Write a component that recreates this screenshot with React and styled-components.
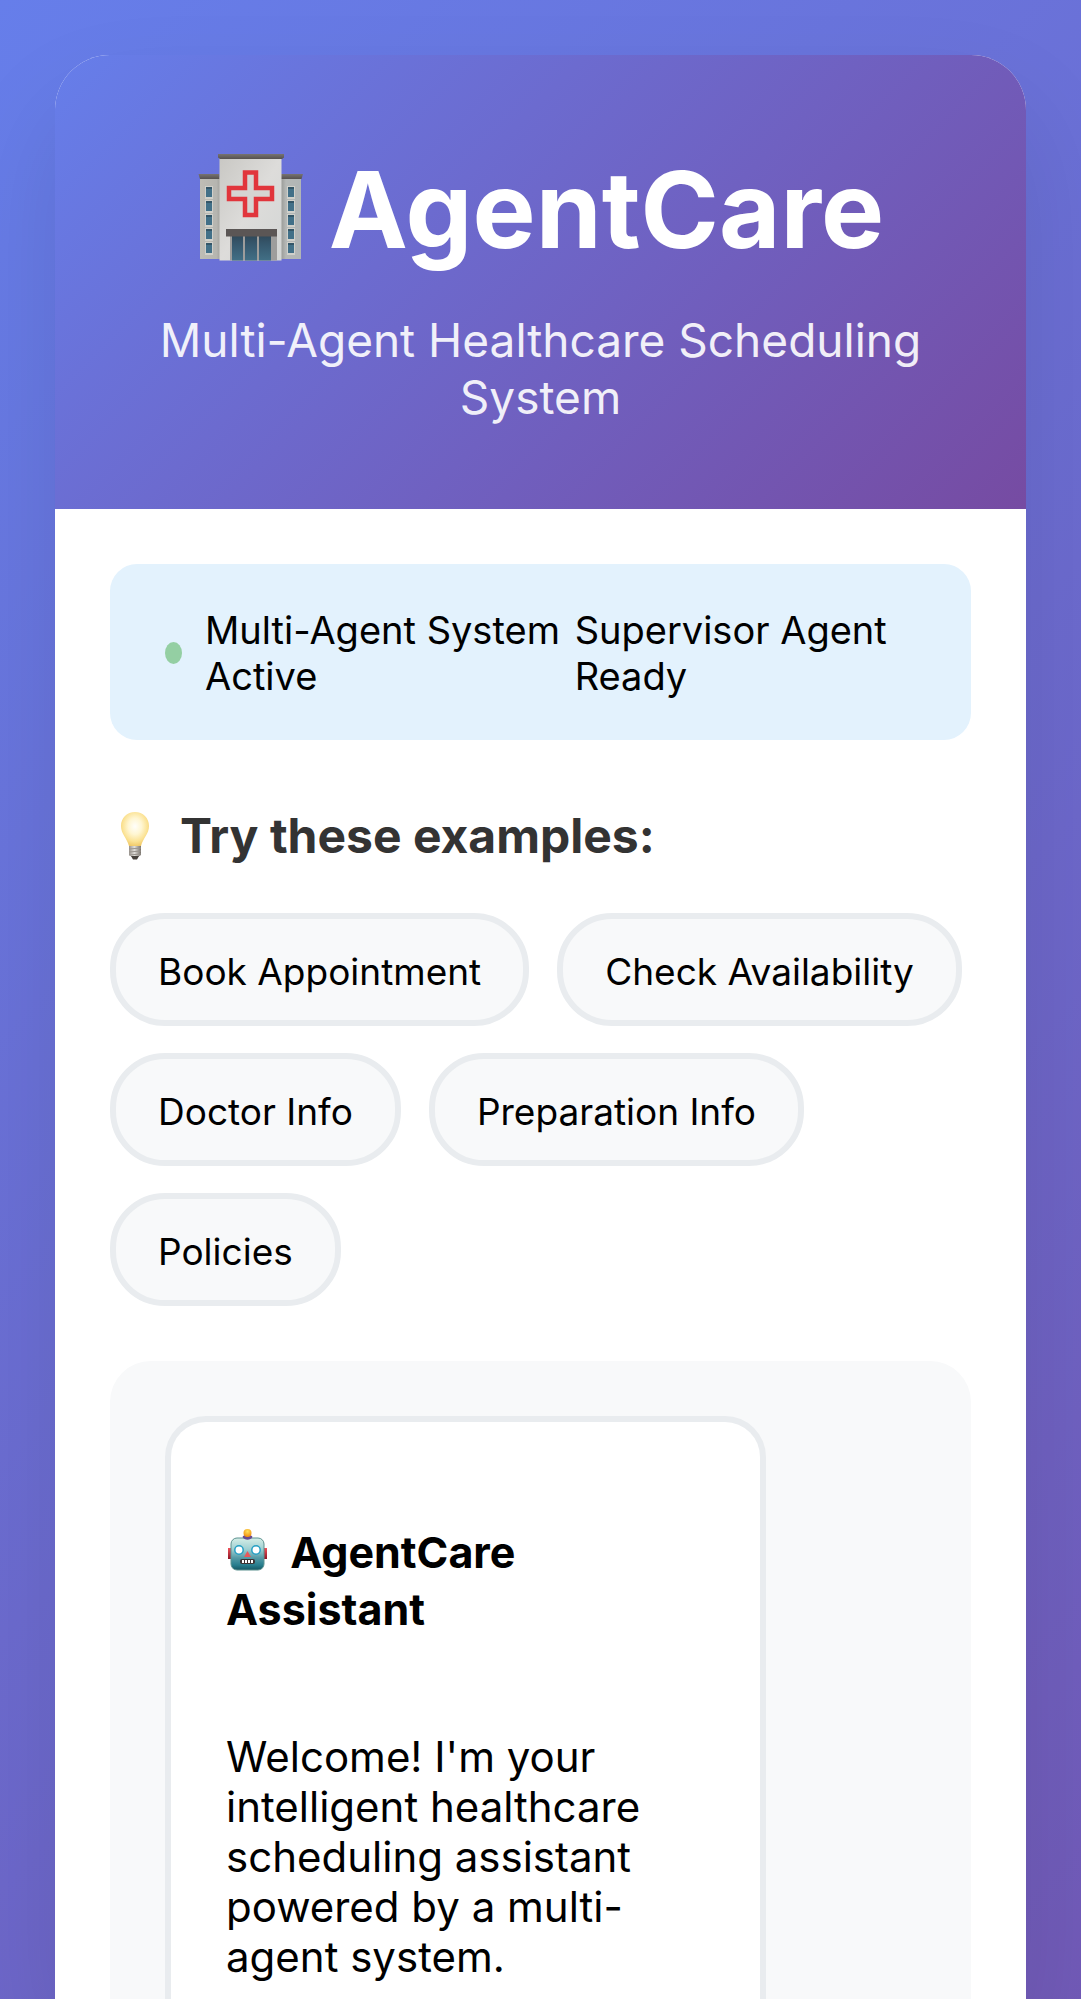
import React from "react";
import styled, { createGlobalStyle } from "styled-components";

const GlobalStyle = createGlobalStyle`
  *, *::before, *::after { box-sizing: border-box; }
  html { background: #6c5ab5; }
  body {
    margin: 0;
    font-family: Inter, "Liberation Sans", sans-serif;
    color: #000;
  }
`;

const Page = styled.div`
  height: 100vh;
  overflow: hidden;
  padding: 55px 55px 0;
  display: flex;
  flex-direction: column;
  background: linear-gradient(135deg, #667eea 0%, #764ba2 100%) no-repeat;
  background-size: 100% 165vh;
`;

const Shell = styled.div`
  flex: 1;
  display: flex;
  flex-direction: column;
  background: #fff;
  border-radius: 55px 55px 0 0;
  overflow: hidden;
  box-shadow: 0 55px 110px rgba(0, 0, 0, 0.1);
`;

const Header = styled.header`
  padding: 82px 82px 83px;
  text-align: center;
  color: #fff;
  background: linear-gradient(135deg, #667eea 0%, #764ba2 100%);
`;

const Title = styled.h1`
  margin: 0 0 30px;
  display: flex;
  justify-content: center;
  gap: 24px;
  font-size: 106px;
  line-height: 145px;
  font-weight: 700;
`;

const Tagline = styled.p`
  margin: 0;
  font-size: 46px;
  line-height: 57px;
  opacity: 0.9;
`;

const Main = styled.main`
  flex: 1;
  display: flex;
  flex-direction: column;
  padding: 55px 55px 0;
`;

const StatusBar = styled.div`
  display: grid;
  grid-template-columns: 6fr 5fr;
  align-items: center;
  padding: 43px 55px 41px;
  border-radius: 27px;
  background: #e3f2fd;
  font-size: 38px;
  line-height: 46px;
`;

const StatusItem = styled.div`
  display: flex;
  align-items: center;
  gap: 23px;
`;

const Dot = styled.span`
  flex: none;
  width: 17px;
  height: 22px;
  border-radius: 50%;
  background: #94cfa3;
`;

const SectionTitle = styled.h2`
  margin: 66px 0 48px;
  display: flex;
  align-items: center;
  gap: 20px;
  font-size: 48px;
  line-height: 59px;
  font-weight: 700;
  color: #333;
`;

const Examples = styled.div`
  display: flex;
  flex-wrap: wrap;
  gap: 27px 28px;
`;

const Chip = styled.button`
  padding: 30px 42px 26px;
  border: 6px solid #e9ecef;
  border-radius: 55px;
  background: #f8f9fa;
  color: #000;
  font: 400 37px/45px Inter, "Liberation Sans", sans-serif;
  cursor: pointer;
`;

const Chat = styled.section`
  flex: 1;
  display: flex;
  margin-top: 55px;
  padding: 55px 55px 0;
  border-radius: 41px 41px 0 0;
  background: #f8f9fa;
`;

const Message = styled.article`
  width: 80%;
  padding: 102px 55px 0;
  border: 6px solid #e9ecef;
  border-bottom: 0;
  border-radius: 41px 41px 0 0;
  background: #fff;
`;

const Author = styled.h3`
  margin: 0 0 94px;
  font-size: 43px;
  line-height: 57px;
  font-weight: 700;
`;

const Text = styled.p`
  margin: 0;
  font-size: 42px;
  line-height: 50px;
`;

const HospitalSvg = styled.svg`
  flex: none;
  width: 108px;
  height: 108px;
  margin-top: 16px;
`;

const BulbSvg = styled.svg`
  flex: none;
  width: 50px;
  height: 50px;
`;

const RobotSvg = styled.svg`
  width: 44px;
  height: 44px;
  margin-right: 10px;
  vertical-align: -4px;
`;

const Hospital = () => (
  <HospitalSvg viewBox="0 0 108 108" aria-hidden="true">
    <defs>
      <linearGradient id="wall" x1="0" x2="1" y1="0" y2="1">
        <stop offset="0" stopColor="#c9c8c4" />
        <stop offset="0.5" stopColor="#dddcda" />
        <stop offset="1" stopColor="#d3d6d5" />
      </linearGradient>
      <linearGradient id="wing" x1="0" x2="1">
        <stop offset="0" stopColor="#bfbdb5" />
        <stop offset="0.75" stopColor="#b5b5b0" />
        <stop offset="1" stopColor="#999994" />
      </linearGradient>
      <linearGradient id="wingRight" x1="0" x2="1">
        <stop offset="0" stopColor="#999a97" />
        <stop offset="0.25" stopColor="#b5b8b6" />
        <stop offset="1" stopColor="#b0b5b6" />
      </linearGradient>
      <linearGradient id="roof" x1="0" x2="0" y1="0" y2="1">
        <stop offset="0" stopColor="#777371" />
        <stop offset="1" stopColor="#555150" />
      </linearGradient>
      <linearGradient id="glass" x1="0" x2="0" y1="0" y2="1">
        <stop offset="0" stopColor="#30495a" />
        <stop offset="0.3" stopColor="#35566b" />
        <stop offset="1" stopColor="#416f86" />
      </linearGradient>
    </defs>
    <path d="M3 24h22v82H3z" fill="url(#wing)" />
    <path d="M84 24h20v82H84z" fill="url(#wingRight)" />
    <path d="M1.500 21h21v5H3z" fill="url(#roof)" />
    <path d="M84 21h22l-1.500 5H84z" fill="url(#roof)" />
    <path d="M22.500 5h62v102.500h-62z" fill="url(#wall)" />
    <path d="M21 1h66v3.500L85 6H23l-2-1.500z" fill="url(#roof)" />
    {[33, 47, 61, 75, 89].map((y) => (
      <g key={y}>
        <path d={`M8 ${y}h8v13H8zM90 ${y}h8v13h-8z`} fill="#d0d0ca" />
        <path d={`M9 ${y + 1}h6v10H9zM91 ${y + 1}h6v10h-6z`} fill="#427088" />
        <path d={`M9 ${y + 1}h6v2H9zM91 ${y + 1}h6v2h-6z`} fill="#345668" />
      </g>
    ))}
    <path
      d="M48 19.500h11v15.500h16v11H59v16H48V46H32V35h16z"
      fill="#d5d4d2"
      stroke="#e1353c"
      strokeWidth="4.500"
    />
    <path d="M33 82h47v25.500H33z" fill="#9d9d9c" />
    <path d="M35 83h11v24.500H35zM48 83h12v24.500H48zM62 83h12v24.500H62z" fill="url(#glass)" />
    <path d="M29 76h51v7.500H29z" fill="#5b5655" />
  </HospitalSvg>
);

const Bulb = () => (
  <BulbSvg viewBox="0 0 50 50" aria-hidden="true">
    <defs>
      <radialGradient id="glow" cx="0.5" cy="0.42" r="0.6">
        <stop offset="0" stopColor="#fffefb" />
        <stop offset="0.4" stopColor="#fff6d2" />
        <stop offset="0.75" stopColor="#fbe293" />
        <stop offset="1" stopColor="#f0c765" />
      </radialGradient>
      <linearGradient id="cap" x1="0" x2="1">
        <stop offset="0" stopColor="#99938d" />
        <stop offset="0.45" stopColor="#e0deda" />
        <stop offset="1" stopColor="#77716b" />
      </linearGradient>
    </defs>
    <path d="M25 1c-8 0-14 6-14 14 0 8 6 12 8 20h12c2-8 8-12 8-20 0-8-6-14-14-14z" fill="url(#glow)" />
    <path d="M19 35h12v9l-3 2h-6l-3-2z" fill="url(#cap)" />
    <path d="M19 38l12-1M19 41l12-1M19 44l12-1" stroke="#99948e" strokeWidth="1" />
    <path d="M21 45h8l-2 3.500h-4z" fill="#46413c" />
  </BulbSvg>
);

const Robot = () => (
  <RobotSvg viewBox="0 0 44 44" aria-hidden="true">
    <defs>
      <linearGradient id="face" x1="0" x2="0" y1="0" y2="1">
        <stop offset="0" stopColor="#d5eee7" />
        <stop offset="0.35" stopColor="#9fd0d2" />
        <stop offset="0.62" stopColor="#549aa6" />
        <stop offset="0.85" stopColor="#277d8d" />
        <stop offset="1" stopColor="#165763" />
      </linearGradient>
      <linearGradient id="ear" x1="0" x2="0" y1="0" y2="1">
        <stop offset="0" stopColor="#f0525a" />
        <stop offset="1" stopColor="#8e1424" />
      </linearGradient>
      <radialGradient id="bulbTop" cx="0.5" cy="0.3" r="0.7">
        <stop offset="0" stopColor="#ffe15b" />
        <stop offset="1" stopColor="#f08b0b" />
      </radialGradient>
    </defs>
    <path d="M2 20h4v11H2zM37 20h4v11h-4z" fill="url(#ear)" />
    <rect x="5" y="10" width="33" height="32" rx="6" fill="url(#face)" stroke="#5d9290" strokeWidth="1" />
    <path d="M16.500 9c1-3 9-3 10 0-2 3.500-8 3.500-10 0z" fill="#694a91" />
    <circle cx="21.500" cy="5" r="4" fill="url(#bulbTop)" />
    <circle cx="13" cy="22" r="4.200" fill="#fff" stroke="#259fc4" strokeWidth="1.500" />
    <circle cx="30" cy="22" r="4.200" fill="#fff" stroke="#259fc4" strokeWidth="1.500" />
    <path d="M21.500 23l3.500 6h-7z" fill="#e9575a" />
    <rect x="14" y="31" width="15" height="5" rx="2" fill="#3d3434" />
    <path d="M16 32h2v3h-2zM19 32h2v3h-2zM22 32h2v3h-2zM25 32h2v3h-2z" fill="#fff" />
  </RobotSvg>
);

const examples = [
  "Book Appointment",
  "Check Availability",
  "Doctor Info",
  "Preparation Info",
  "Policies",
];

export default function App() {
  return (
    <>
      <GlobalStyle />
      <Page>
        <Shell>
          <Header>
            <Title>
              <Hospital />
              AgentCare
            </Title>
            <Tagline>Multi-Agent Healthcare Scheduling System</Tagline>
          </Header>
          <Main>
            <StatusBar>
              <StatusItem>
                <Dot />
                <span>Multi-Agent System Active</span>
              </StatusItem>
              <StatusItem>Supervisor Agent Ready</StatusItem>
            </StatusBar>
            <SectionTitle>
              <Bulb />
              Try these examples:
            </SectionTitle>
            <Examples>
              {examples.map((label) => (
                <Chip key={label} type="button">
                  {label}
                </Chip>
              ))}
            </Examples>
            <Chat>
              <Message>
                <Author>
                  <Robot /> AgentCare Assistant
                </Author>
                <Text>
                  Welcome! I'm your intelligent healthcare scheduling assistant
                  powered by a multi-agent system.
                </Text>
              </Message>
            </Chat>
          </Main>
        </Shell>
      </Page>
    </>
  );
}
